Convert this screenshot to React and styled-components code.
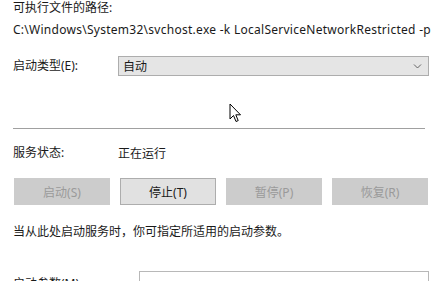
import styled, { createGlobalStyle } from "styled-components";

const GlobalStyle = createGlobalStyle`
  html, body {
    margin: 0;
    padding: 0;
    background: #ffffff;
  }
  body {
    font-family: "Noto Sans", "Noto Sans CJK SC", sans-serif;
    font-size: 12px;
    color: #1a1a1a;
  }
`;

const Page = styled.div`
  position: relative;
  width: 442px;
  height: 281px;
  overflow: hidden;
  padding: 0 13px;
  box-sizing: border-box;
`;

const Line = styled.div`
  line-height: 16px;
  height: 16px;
  margin-top: ${(p) => p.$top || 0}px;
  white-space: nowrap;
  letter-spacing: ${(p) => p.$spacing || 0}px;
`;

const Row = styled.div`
  display: flex;
  align-items: ${(p) => p.$align || "center"};
  margin-top: ${(p) => p.$top || 0}px;
`;

const Label = styled.div`
  width: ${(p) => p.$width || 105}px;
  flex: none;
  line-height: 16px;
  white-space: nowrap;
  margin-top: ${(p) => p.$top || 0}px;
`;

const Select = styled.div`
  flex: 1;
  height: 20px;
  box-sizing: border-box;
  border: 1px solid #adadad;
  background: #e5e5e5;
  display: flex;
  align-items: center;
  justify-content: space-between;
  padding: 0 6px 0 4px;
`;

const Divider = styled.div`
  height: 1px;
  background: #a0a0a0;
  margin: 52px 4px 0 0;
`;

const Buttons = styled.div`
  display: grid;
  grid-template-columns: repeat(4, 96px);
  justify-content: space-between;
  margin: 16px 1px 0 1px;
`;

const Button = styled.div`
  height: 27px;
  box-sizing: border-box;
  display: flex;
  align-items: center;
  justify-content: center;
  border: 1px solid ${(p) => (p.$disabled ? "#cccccc" : "#adadad")};
  background: ${(p) => (p.$disabled ? "#cccccc" : "#e1e1e1")};
  color: ${(p) => (p.$disabled ? "#9a9a9a" : "#1a1a1a")};
`;

const Input = styled.div`
  flex: 1;
  height: 22px;
  box-sizing: border-box;
  border: 1px solid #b8b8b8;
  background: #ffffff;
`;

const Cursor = styled.svg`
  position: absolute;
  left: 229px;
  top: 103px;
`;

export default function App() {
  return (
    <Page>
      <GlobalStyle />
      <Line>可执行文件的路径:</Line>
      <Line $top={6} $spacing={0.27}>
        C:\Windows\System32\svchost.exe -k LocalServiceNetworkRestricted -p
      </Line>
      <Row $top={18}>
        <Label>启动类型(E):</Label>
        <Select>
          <span>自动</span>
          <svg width="9" height="6" viewBox="0 0 9 6">
            <path d="M1 1.5 L4.5 5 L8 1.5" fill="none" stroke="#555" strokeWidth="0.9" />
          </svg>
        </Select>
      </Row>
      <Divider />
      <Row $top={15}>
        <Label>服务状态:</Label>
        <span>正在运行</span>
      </Row>
      <Buttons>
        <Button $disabled>启动(S)</Button>
        <Button>停止(T)</Button>
        <Button $disabled>暂停(P)</Button>
        <Button $disabled>恢复(R)</Button>
      </Buttons>
      <Line $top={19}>当从此处启动服务时，你可指定所适用的启动参数。</Line>
      <Row $top={31} $align="flex-start">
        <Label $width={126} $top={5}>启动参数(M):</Label>
        <Input />
      </Row>
      <Cursor width="13" height="20" viewBox="0 0 13 20">
        <path
          d="M1 1 L1 16 L4.5 12.5 L7 18.5 L9.2 17.6 L6.8 11.8 L11.5 11.8 Z"
          fill="#ffffff"
          stroke="#000000"
          strokeWidth="1"
          strokeLinejoin="miter"
        />
      </Cursor>
    </Page>
  );
}
